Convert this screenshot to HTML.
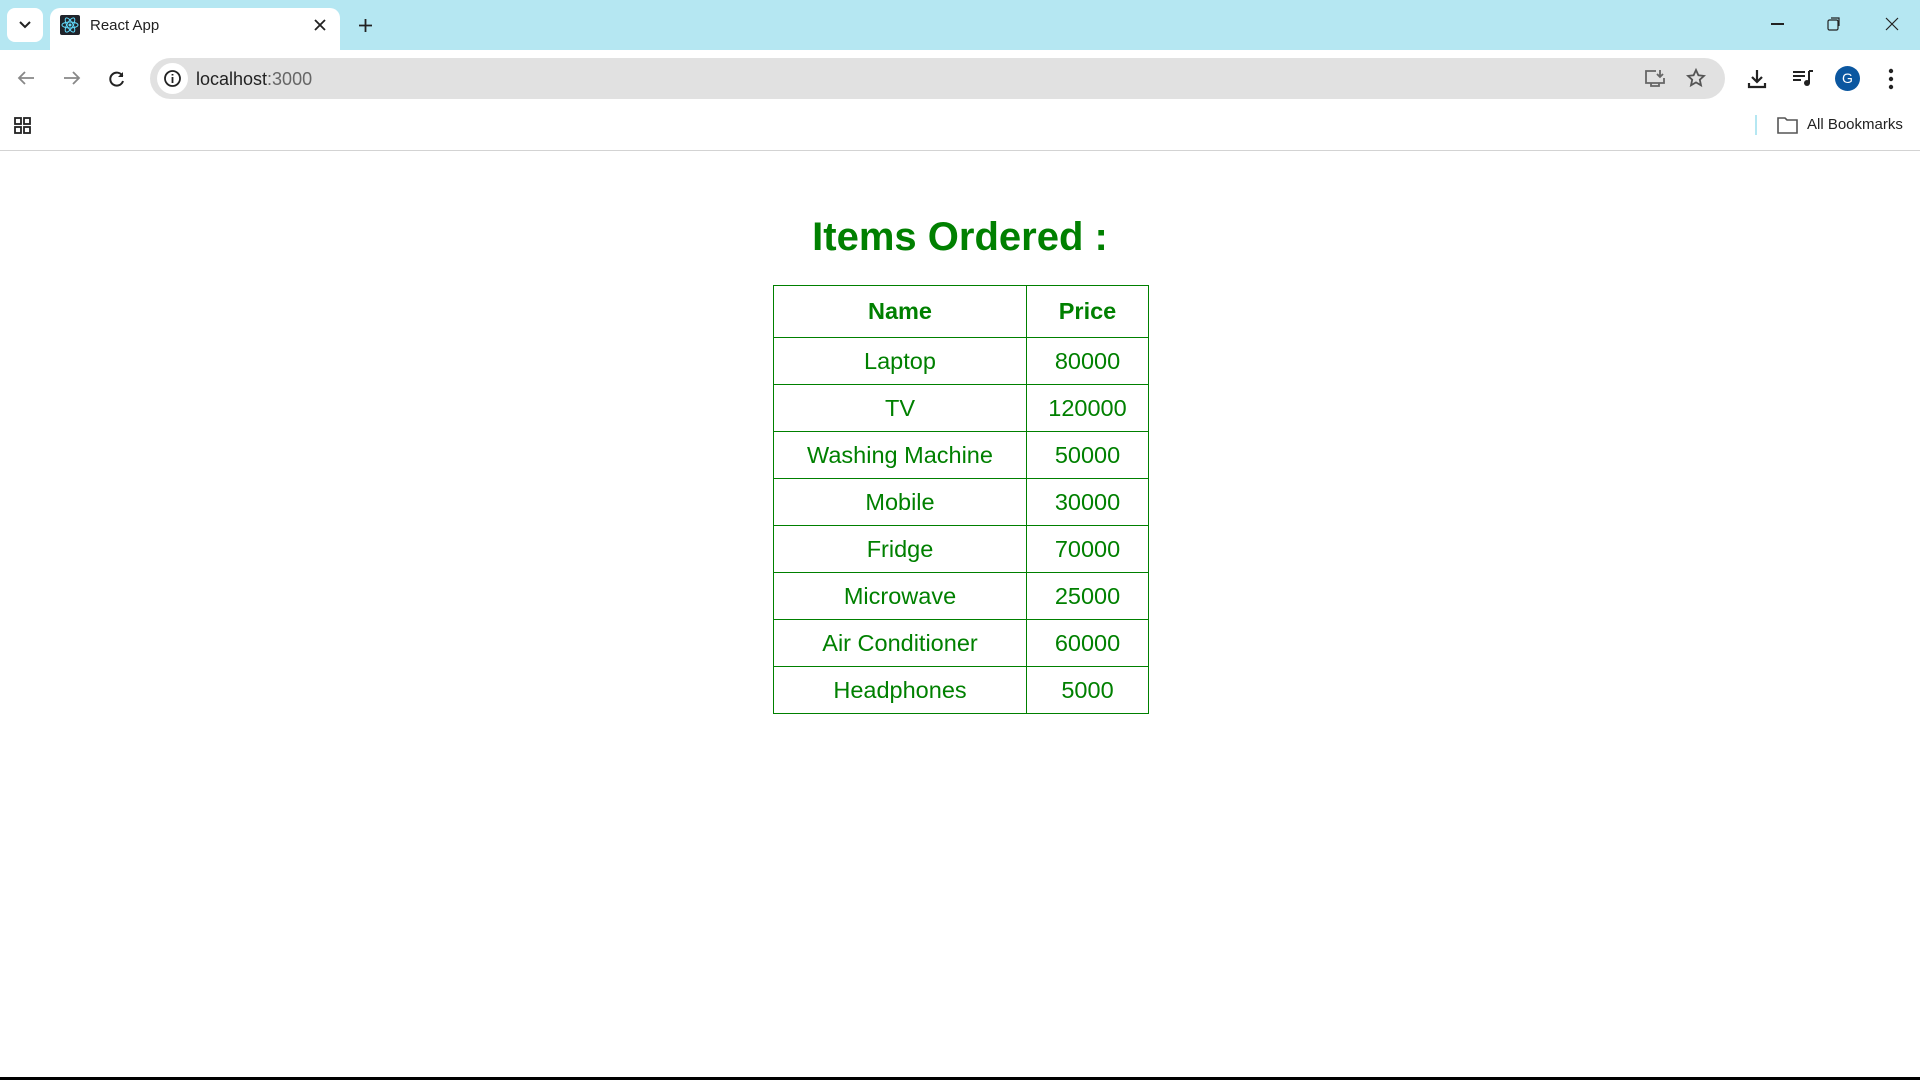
<!DOCTYPE html>
<html><head><meta charset="utf-8"><style>
*{margin:0;padding:0;box-sizing:border-box}
body{width:1920px;height:1080px;overflow:hidden;background:#fff;font-family:"Liberation Sans",Arial,sans-serif;position:relative}
.abs{position:absolute}
#tabs{left:0;top:0;width:1920px;height:50px;background:#b5e7f2}
#tab{left:50px;top:8px;width:290px;height:42px;background:#fff;border-radius:10px 10px 0 0}
#toolbar{left:0;top:50px;width:1920px;height:100px;background:#fff;border-radius:10px 10px 0 0}
#omni{left:150px;top:58px;width:1575px;height:41px;background:#e1e1e1;border-radius:21px}
#line{left:0;top:150px;width:1920px;height:1px;background:#d3d3d3}
h1{position:absolute;left:0;width:1920px;top:212px;text-align:center;color:#008000;font-size:40px;font-weight:bold;line-height:50px}
table{position:absolute;left:773px;top:285px;border-collapse:collapse;color:#008000;font-size:23.5px}
td,th{border:1px solid #008000;text-align:center;height:47px;padding:0}
th{height:52px;font-weight:bold}
td:first-child,th:first-child{width:253px}
td:last-child,th:last-child{width:122px}
#bottom{left:0;top:1077px;width:1920px;height:3px;background:#000}
</style></head><body>
<div class="abs" id="tabs"></div>
<div class="abs" style="left:7px;top:8px;width:36px;height:34px;background:#fff;border-radius:8px"></div>
<svg class="abs" style="left:19px;top:20px" width="12" height="10"><path d="M1 2l5 5 5-5" stroke="#222" stroke-width="2" fill="none"/></svg>
<div class="abs" id="tab"></div>
<div class="abs" style="left:60px;top:15px;width:20px;height:20px;background:#20232a;border-radius:2px"></div>
<svg class="abs" style="left:60px;top:15px" width="20" height="20" viewBox="0 0 20 20"><g stroke="#61dafb" fill="none" stroke-width="1"><ellipse cx="10" cy="10" rx="8" ry="3"/><ellipse cx="10" cy="10" rx="8" ry="3" transform="rotate(60 10 10)"/><ellipse cx="10" cy="10" rx="8" ry="3" transform="rotate(120 10 10)"/></g><circle cx="10" cy="10" r="1.5" fill="#61dafb"/></svg>
<div class="abs" style="left:90px;top:17px;font-size:15px;color:#222">React App</div>
<svg class="abs" style="left:314px;top:19px" width="12" height="12"><path d="M1 1l10 10M11 1L1 11" stroke="#222" stroke-width="1.8"/></svg>
<svg class="abs" style="left:358px;top:18px" width="15" height="15"><path d="M7.5 1v13M1 7.5h13" stroke="#222" stroke-width="1.8"/></svg>
<div class="abs" style="left:1771px;top:23px;width:13px;height:1.5px;background:#222"></div>
<svg class="abs" style="left:1827px;top:17px" width="14" height="14"><rect x="1" y="3" width="10" height="10" rx="1.5" stroke="#222" fill="none" stroke-width="1.2"/><path d="M4 1h8v8" stroke="#222" fill="none" stroke-width="1.2"/></svg>
<svg class="abs" style="left:1885px;top:17px" width="14" height="14"><path d="M1 1l12 12M13 1L1 13" stroke="#222" stroke-width="1.2"/></svg>
<div class="abs" id="toolbar"></div>
<svg class="abs" style="left:16px;top:70px" width="20" height="16"><path d="M18 8H3M9 2L3 8l6 6" stroke="#888" stroke-width="1.8" fill="none"/></svg>
<svg class="abs" style="left:62px;top:70px" width="20" height="16"><path d="M2 8h15M11 2l6 6-6 6" stroke="#888" stroke-width="1.8" fill="none"/></svg>
<svg class="abs" style="left:108px;top:70px" width="18" height="18"><path d="M14.5 6A6.5 6.5 0 1 0 15 11" stroke="#222" stroke-width="2" fill="none"/><path d="M15 2v5h-5" fill="#222"/></svg>
<div class="abs" id="omni"></div>
<div class="abs" style="left:157px;top:63px;width:31px;height:31px;background:#fff;border-radius:50%"></div>
<svg class="abs" style="left:163px;top:69px" width="19" height="19"><circle cx="9.5" cy="9.5" r="7.5" stroke="#222" stroke-width="1.8" fill="none"/><path d="M9.5 8v6M9.5 5v1.5" stroke="#222" stroke-width="1.8"/></svg>
<div class="abs" style="left:196px;top:69px;font-size:18px;color:#222">localhost<span style="color:#666">:3000</span></div>
<svg class="abs" style="left:1644px;top:69px" width="22" height="20"><path d="M12 2H2v12h18v-5" stroke="#666" stroke-width="1.8" fill="none"/><path d="M7 14v3h8v-3M16 1v7M13 5l3 3 3-3" stroke="#666" stroke-width="1.8" fill="none"/></svg>
<svg class="abs" style="left:1686px;top:68px" width="20" height="20"><path d="M10 2l2.4 5.3 5.6.6-4.2 3.8 1.2 5.6L10 14.4 5 17.3l1.2-5.6L2 7.9l5.6-.6z" stroke="#555" stroke-width="1.8" fill="none"/></svg>
<svg class="abs" style="left:1746px;top:68px" width="22" height="22"><path d="M11 2v12M6 9l5 5 5-5M3 15v4h16v-4" stroke="#222" stroke-width="2.2" fill="none"/></svg>
<svg class="abs" style="left:1792px;top:69px" width="22" height="18"><path d="M1 3h12M1 7h12M1 11h8" stroke="#222" stroke-width="2"/><path d="M17 2v12" stroke="#222" stroke-width="2"/><path d="M17 2h4" stroke="#222" stroke-width="2"/><circle cx="15" cy="14" r="3" fill="#222"/></svg>
<div class="abs" style="left:1835px;top:66px;width:25px;height:25px;border-radius:50%;background:#0b57a0;color:#fff;font-size:14px;text-align:center;line-height:25px">G</div>
<svg class="abs" style="left:1888px;top:68px" width="6" height="22"><circle cx="3" cy="3" r="2.2" fill="#222"/><circle cx="3" cy="11" r="2.2" fill="#222"/><circle cx="3" cy="19" r="2.2" fill="#222"/></svg>
<svg class="abs" style="left:14px;top:117px" width="18" height="18"><g stroke="#222" stroke-width="1.8" fill="none"><rect x="1" y="1" width="6" height="6"/><rect x="10" y="1" width="6" height="6"/><rect x="1" y="10" width="6" height="6"/><rect x="10" y="10" width="6" height="6"/></g></svg>
<div class="abs" style="left:1755px;top:115px;width:2px;height:20px;background:#b5e7f2"></div>
<svg class="abs" style="left:1777px;top:117px" width="22" height="17"><path d="M1 1h7l2 2h10v13H1z" stroke="#555" stroke-width="1.6" fill="none"/></svg>
<div class="abs" style="left:1807px;top:116px;font-size:15px;color:#222">All Bookmarks</div>
<div class="abs" id="line"></div>
<h1>Items Ordered :</h1>
<table>
<tr><th>Name</th><th>Price</th></tr>
<tr><td>Laptop</td><td>80000</td></tr>
<tr><td>TV</td><td>120000</td></tr>
<tr><td>Washing Machine</td><td>50000</td></tr>
<tr><td>Mobile</td><td>30000</td></tr>
<tr><td>Fridge</td><td>70000</td></tr>
<tr><td>Microwave</td><td>25000</td></tr>
<tr><td>Air Conditioner</td><td>60000</td></tr>
<tr><td>Headphones</td><td>5000</td></tr>
</table>
<div class="abs" id="bottom"></div>
</body></html>
